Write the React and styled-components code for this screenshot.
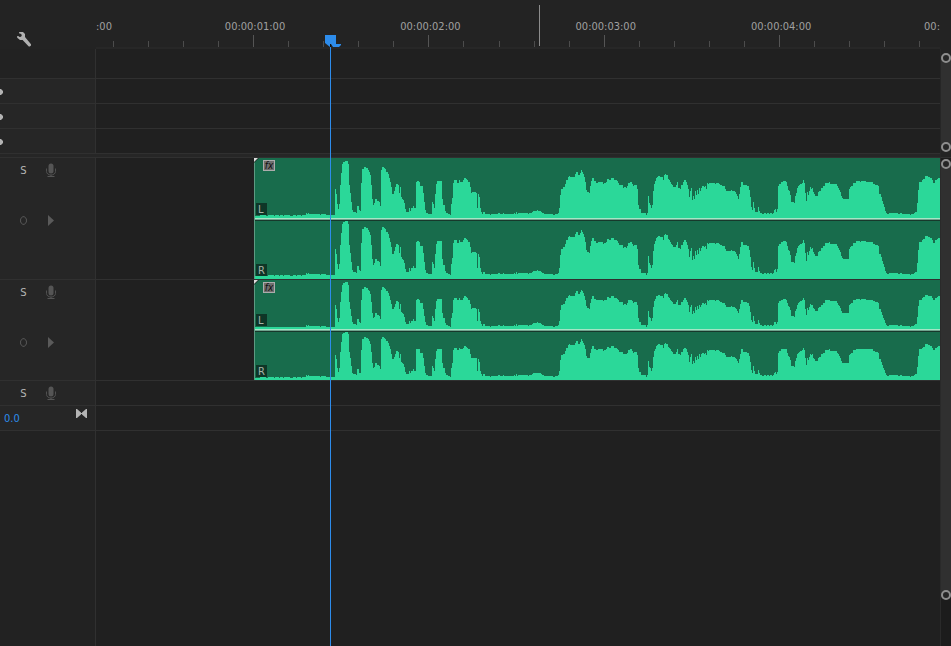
import React from 'react'
import styled, { createGlobalStyle } from 'styled-components'

// [first column, peak height] pairs, each level holds until the next pair
const PEAKS = [
  [0, 2], [6, 3], [12, 2], [14, 3], [20, 2], [21, 3], [25, 2], [26, 3], [29, 2], [30, 3], [36, 2], [39, 3], [42, 2], [43, 3],
  [47, 2], [48, 3], [52, 5], [53, 4], [54, 5], [55, 4], [66, 3], [67, 4], [72, 3],
  [81, 29], [82, 24], [83, 14], [84, 9], [85, 14], [86, 33], [87, 45], [88, 54], [89, 56], [91, 57], [94, 54], [95, 33],
  [96, 25], [97, 16], [98, 8], [99, 6], [102, 5], [103, 12], [105, 8], [106, 7], [107, 35], [108, 49], [110, 51], [112, 50],
  [114, 48], [115, 46], [116, 43], [117, 33], [118, 19], [119, 13], [120, 15], [121, 19], [123, 17], [125, 16], [126, 12],
  [127, 48], [128, 51], [130, 50], [131, 49], [132, 46], [134, 44], [135, 40], [136, 36], [137, 31], [138, 24], [140, 27],
  [141, 31], [142, 34], [144, 33], [145, 25], [146, 31], [147, 21], [148, 19], [149, 18], [150, 15], [151, 9], [152, 6],
  [155, 10], [156, 7], [157, 10], [159, 12], [160, 10], [162, 36], [163, 37], [165, 36], [166, 32], [169, 25], [170, 16],
  [171, 8], [172, 5], [174, 4], [178, 16], [179, 14], [180, 10], [181, 24], [182, 34], [183, 37], [188, 19], [189, 13],
  [191, 7], [192, 5], [194, 4], [196, 3], [197, 14], [198, 20], [199, 35], [200, 38], [203, 35], [205, 38], [206, 36],
  [209, 38], [210, 40], [212, 39], [213, 38], [214, 36], [216, 31], [217, 25], [218, 26], [222, 25], [223, 10], [224, 24],
  [225, 21], [226, 10], [227, 6], [228, 4], [229, 6], [231, 4], [236, 3], [237, 4], [244, 5], [246, 4], [249, 5], [250, 4],
  [260, 5], [261, 4], [262, 6], [263, 4], [264, 5], [274, 4], [275, 5], [278, 6], [279, 7], [283, 8], [284, 7], [287, 6],
  [288, 5], [290, 4], [299, 3], [301, 4], [304, 5], [305, 10], [306, 23], [307, 29], [309, 31], [311, 34], [312, 38],
  [314, 41], [315, 42], [316, 41], [321, 44], [322, 46], [324, 43], [326, 45], [327, 48], [328, 46], [329, 44], [330, 41],
  [331, 36], [332, 28], [333, 26], [335, 25], [336, 32], [337, 37], [338, 40], [340, 37], [342, 35], [344, 36],
  [349, 34], [350, 35], [352, 36], [353, 39], [355, 38], [357, 40], [360, 38], [363, 37], [364, 35], [365, 33], [369, 30],
  [370, 31], [372, 30], [373, 32], [374, 35], [376, 36], [378, 34], [379, 32], [380, 33], [383, 29], [384, 13], [385, 9],
  [387, 5], [392, 3], [393, 5], [394, 22], [395, 15], [396, 13], [397, 10], [398, 13], [399, 27], [400, 34], [401, 37],
  [402, 40], [403, 41], [404, 42], [406, 41], [409, 38], [410, 43], [411, 44], [412, 43], [414, 39], [415, 38], [416, 36],
  [417, 34], [418, 33], [419, 31], [422, 33], [423, 36], [424, 30], [426, 29], [427, 33], [429, 36], [430, 38], [432, 36],
  [433, 33], [434, 29], [435, 21], [436, 27], [437, 30], [438, 18], [439, 22], [440, 19], [441, 27], [442, 23], [443, 28],
  [444, 24], [445, 30], [446, 27], [447, 30], [448, 32], [450, 31], [451, 32], [452, 29], [453, 35], [454, 34], [455, 35],
  [461, 34], [462, 35], [465, 34], [466, 33], [468, 32], [471, 29], [472, 27], [477, 28], [478, 27], [481, 26], [482, 24],
  [483, 22], [484, 19], [485, 24], [486, 31], [487, 36], [489, 33], [493, 32], [495, 28], [496, 21], [497, 11], [498, 8],
  [499, 16], [500, 10], [501, 6], [504, 11], [505, 7], [506, 5], [508, 4], [510, 5], [512, 4], [513, 5], [515, 4], [516, 5],
  [518, 4], [519, 5], [520, 8], [521, 9], [522, 6], [523, 9], [524, 32], [525, 34], [527, 36], [529, 37], [532, 36],
  [533, 32], [534, 28], [535, 27], [536, 23], [537, 16], [540, 15], [541, 22], [542, 25], [543, 30], [544, 32], [545, 33],
  [546, 34], [548, 35], [549, 38], [550, 35], [551, 25], [552, 17], [553, 26], [554, 23], [555, 27], [556, 31], [557, 29],
  [558, 30], [559, 26], [560, 24], [561, 22], [564, 26], [565, 27], [567, 30], [569, 32], [571, 35], [575, 36], [576, 34],
  [583, 32], [584, 30], [585, 28], [586, 26], [587, 22], [588, 20], [589, 19], [595, 29], [596, 31], [597, 32], [599, 35],
  [602, 37], [606, 36], [607, 37], [612, 36], [619, 34], [621, 33], [624, 32], [625, 24], [627, 21], [628, 17], [629, 14],
  [630, 11], [631, 7], [632, 5], [633, 4], [635, 5], [644, 4], [646, 5], [648, 4], [656, 3], [657, 4], [660, 5], [661, 6],
  [663, 15], [664, 28], [665, 36], [668, 38], [669, 39], [671, 42], [674, 41], [676, 40], [678, 38], [679, 35], [681, 38],
  [683, 39], [684, 40],
]
const CLIP_UNITS = 686

// the first and the last second stand outside the view, the edge labels name them
const SECONDS = ['', '00:00:01:00', '00:00:02:00', '00:00:03:00', '00:00:04:00', '']

function wavePath(base, lift) {
  const steps = PEAKS.map(([x, h]) => `H${x}V${base - h - lift}`).join('')
  return `M0 ${base}${steps}H${CLIP_UNITS}V${base}Z`
}

function MicIcon() {
  return (
    <svg width="10" height="15" viewBox="0 0 10 15" fill="none" aria-hidden="true">
      <rect x="2.5" y="0.5" width="5" height="10" rx="2.5" fill="#555" />
      <path d="M0.5 5.500V8.500C0.500 10.500 2.500 12 5 12S9.500 10.500 9.500 8.500V5.500" stroke="#505050" />
      <path d="M5 12V13.500M1.500 13.500H8.500" stroke="#555" />
    </svg>
  )
}

function WrenchIcon() {
  return (
    <svg width="15" height="15" viewBox="0 0 15 15" aria-hidden="true">
      <path
        fill="#b0b0b0"
        d="M2 0.200L3 0H6L8 2V5L14 12.200V13.400L12.800 14.600H11.800L5.600 8H3L0.200 5.800V4H1.200L2.600 5.100L4 4.800L4.800 3.400L4.200 2L2 1.200Z"
      />
    </svg>
  )
}

function TrackControls({ name, keyframes }) {
  return (
    <Controls>
      <ControlLine>
        <IconButton aria-label={`Solo ${name}`}>S</IconButton>
        <IconButton aria-label={`Record ${name}`}><MicIcon /></IconButton>
      </ControlLine>
      {keyframes && (
        <ControlLine>
          <IconButton aria-label={`Add keyframe ${name}`}>
            <svg width="7" height="9" viewBox="0 0 7 9" fill="none" aria-hidden="true">
              <path d="M2.500 0.700H4.500L6.400 3V6L4.500 8.300H2.500L0.600 6V3Z" stroke="#585858" />
            </svg>
          </IconButton>
          <IconButton aria-label={`Next keyframe ${name}`}>
            <svg width="6" height="11" viewBox="0 0 6 11" aria-hidden="true">
              <path d="M0 0L6 5.500L0 11Z" fill="#5a5a5a" />
            </svg>
          </IconButton>
        </ControlLine>
      )}
    </Controls>
  )
}

function Lane({ label, height, units, lift }) {
  return (
    <LaneBox $height={height}>
      <Wave viewBox={`0 0 ${CLIP_UNITS} ${units}`} preserveAspectRatio="none" aria-hidden="true">
        <path d={wavePath(units, lift)} fill="#2bd899" shapeRendering="crispEdges" />
      </Wave>
      <ChannelBadge>{label}</ChannelBadge>
    </LaneBox>
  )
}

function AudioClip({ left, right }) {
  return (
    <Clip>
      <Lane label="L" height={left} units={60} lift={0} />
      <VolumeLine />
      <Lane label="R" height={right} units={58} lift={1} />
      <Corner width="5" height="5" viewBox="0 0 5 5" aria-hidden="true">
        <path d="M0 0H5L0 5Z" fill="#1c2a24" />
        <path d="M0 0H4L0 4Z" fill="#dcdcdc" />
      </Corner>
      <FxButton aria-label="Clip effects">fx</FxButton>
    </Clip>
  )
}

function App() {
  return (
    <>
      <GlobalStyle />
      <Timeline>
        <Main>
          <Top>
            <Tools>
              <WrenchButton aria-label="Timeline display settings"><WrenchIcon /></WrenchButton>
            </Tools>
            <Ruler>
              <Scale>
                {SECONDS.map((time, i) => (
                  <Second key={i}>
                    <TimeLabel>{time}</TimeLabel>
                    <Ticks>
                      <Tick />
                      <Tick />
                      <Tick $major />
                      <Tick />
                      <Tick />
                    </Ticks>
                  </Second>
                ))}
              </Scale>
              <EdgeLabels>
                <span>:00</span>
                <span>00:</span>
              </EdgeLabels>
              <EndMark />
            </Ruler>
          </Top>

          <Row $height={30}>
            <Head $plain />
            <Track />
          </Row>
          {['V3', 'V2', 'V1'].map((name) => (
            <Row key={name} $height={25}>
              <Head>
                <KeyButton aria-label={`Next keyframe ${name}`}>
                  <svg width="3" height="6" viewBox="0 0 3 6" aria-hidden="true">
                    <path d="M0 0H1L3 2V4L1 6H0Z" fill="#b4b4b4" />
                  </svg>
                </KeyButton>
              </Head>
              <Track />
            </Row>
          ))}
          <Splitter />
          <Row $height={122}>
            <Head><TrackControls name="A1" keyframes /></Head>
            <Track><AudioClip left={60} right={58} /></Track>
          </Row>
          <Row $height={101}>
            <Head><TrackControls name="A2" keyframes /></Head>
            <Track><AudioClip left={49} right={48} /></Track>
          </Row>
          <Row $height={25}>
            <Head><TrackControls name="A3" /></Head>
            <Track />
          </Row>
          <Row $height={25}>
            <Head $spread>
              <VolumeInput aria-label="Master volume" defaultValue="0.0" />
              <FitButton aria-label="Fit track">
                <svg width="11" height="9" viewBox="0 0 11 9" aria-hidden="true">
                  <path d="M0 0H1L5 3.500V5.500L1 9H0Z" fill="#b4b4b4" />
                  <path d="M11 0H10L6 3.500V5.500L10 9H11Z" fill="#b4b4b4" />
                  <path d="M5 4H6V5H5Z" fill="#b4b4b4" />
                </svg>
              </FitButton>
            </Head>
            <Track />
          </Row>
          <Rest>
            <Head $plain />
            <Track />
          </Rest>

          <Overlay>
            <Playhead>
              <PlayheadGrip width="17" height="12" viewBox="0 0 17 12" aria-hidden="true">
                <path d="M0 0H11V9H16V10L14 12H8L6 9L5 9V12L0 8Z" fill="#2d8ceb" />
                <path d="M5 9H6V12H5Z" fill="#101010" />
              </PlayheadGrip>
            </Playhead>
          </Overlay>
        </Main>

        <Scrollbars>
          <VideoScroll>
            <Thumb>
              <Handle aria-label="Video zoom top" />
              <Handle aria-label="Video zoom bottom" />
            </Thumb>
          </VideoScroll>
          <AudioScroll>
            <Thumb>
              <Handle aria-label="Audio zoom top" />
              <Handle aria-label="Audio zoom bottom" />
            </Thumb>
          </AudioScroll>
        </Scrollbars>
      </Timeline>
    </>
  )
}
export default App;

const GlobalStyle = createGlobalStyle`
    *{
        box-sizing: border-box;
    }
    body{
        margin: 0;
        background: #212121;
        color: #a0a0a0;
        font: 11px "DejaVu Sans Condensed", "DejaVu Sans", sans-serif;
    }
    button, input{
        margin: 0;
        padding: 0;
        border: none;
        background: none;
        color: inherit;
        font: inherit;
    }
    svg{
        display: block;
    }
`;

//Page frame
const Timeline = styled.div`
    display: flex;
    min-height: 100vh;
`;

const Main = styled.main`
    position: relative;
    flex: 1;
    min-width: 0;
    display: flex;
    flex-direction: column;
`;

//Ruler
const Top = styled.header`
    display: flex;
    height: 49px;
    background: #232323;
`;

const Tools = styled.div`
    width: 96px;
    padding: 32px 0 0 17px;
`;

const WrenchButton = styled.button`
    display: block;
`;

const Ruler = styled.div`
    position: relative;
    flex: 1;
    min-width: 0;
    overflow: hidden;
    border-bottom: 2px solid #272727;
`;

const Scale = styled.div`
    display: flex;
    margin-left: -12.5%;
    width: 112.5%;
    height: 100%;
`;

const Second = styled.div`
    flex: none;
    width: 18.47%;
    padding-top: 20px;
    display: flex;
    flex-direction: column;
    justify-content: space-between;
`;

const TimeLabel = styled.span`
    height: 14px;
    padding-left: 3px;
    line-height: 14px;
    text-align: center;
    white-space: nowrap;
`;

const EdgeLabels = styled.div`
    position: absolute;
    left: 0;
    right: 0;
    top: 20px;
    display: flex;
    justify-content: space-between;
    line-height: 14px;
`;

const Ticks = styled.div`
    display: grid;
    grid-template-columns: repeat(5, 1fr);
    align-items: end;
    justify-items: center;
`;

const Tick = styled.i`
    width: 1px;
    height: ${(props) => (props.$major ? 12 : 6)}px;
    background: ${(props) => (props.$major ? '#555' : '#4c4c4c')};
`;

const EndMark = styled.i`
    position: absolute;
    left: 52.5%;
    top: 5px;
    width: 1px;
    height: 41px;
    background: #8c8c8c;
`;

//Track rows
const Row = styled.section`
    display: flex;
    height: ${(props) => props.$height}px;
    border-bottom: 1px solid #303030;
`;

const Rest = styled.section`
    flex: 1;
    display: flex;
`;

const Head = styled.div`
    display: flex;
    justify-content: ${(props) => (props.$spread ? 'space-between' : 'flex-start')};
    width: 96px;
    padding-right: ${(props) => (props.$spread ? 8 : 0)}px;
    border-right: 1px solid #303030;
    background: ${(props) => (props.$plain ? '#222' : '#262626')};
`;

const Track = styled.div`
    flex: 1;
    min-width: 0;
    background: #202020;
`;

const Splitter = styled.div`
    height: 4px;
    border-bottom: 1px solid #303030;
    background: #262626;
`;

const Controls = styled.div`
    display: flex;
    flex-direction: column;
    gap: 25px;
    padding-left: 10px;
`;

const ControlLine = styled.div`
    display: flex;
    height: 25px;
`;

const IconButton = styled.button`
    display: flex;
    align-items: center;
    justify-content: center;
    width: 27px;
    color: #b4b4b4;
    font: 10px "DejaVu Sans", sans-serif;
`;

const KeyButton = styled.button`
    display: flex;
    align-items: center;
    padding-top: 2px;
`;

const VolumeInput = styled.input`
    width: 40px;
    padding-left: 4px;
    color: #2d8ceb;
`;

const FitButton = styled.button`
    display: flex;
    padding-top: 3px;
`;

//Clips
const Clip = styled.div`
    position: relative;
    margin-left: 18.72%;
    background: #186c4c;
    &:before{
        content: '';
        position: absolute;
        z-index: 1;
        left: 0;
        top: 0;
        bottom: 0;
        width: 1px;
        background: #5d9a82;
    }
`;

const LaneBox = styled.div`
    position: relative;
    height: ${(props) => props.$height}px;
`;

const Wave = styled.svg`
    width: 100%;
    height: 100%;
`;

const ChannelBadge = styled.span`
    position: absolute;
    left: 2px;
    bottom: 3px;
    width: 11px;
    height: 12px;
    padding-left: 2px;
    background: #0e3627;
    color: #a8b4a8;
    font-size: 11px;
    line-height: 13px;
`;

const VolumeLine = styled.div`
    height: 3px;
    border-top: 1px solid #a4e6c6;
    border-bottom: 1px solid #17382b;
    background: #6fa38d;
`;

const Corner = styled.svg`
    position: absolute;
    z-index: 2;
    left: 0;
    top: 0;
`;

const FxButton = styled.button`
    position: absolute;
    left: 9px;
    top: 2px;
    width: 12px;
    height: 11px;
    border: 1px solid #acacac;
    background: #6e6e6e;
    color: #111;
    font: italic 10px "DejaVu Sans Condensed", sans-serif;
    line-height: 8px;
`;

//Playhead
const Overlay = styled.div`
    position: absolute;
    left: 96px;
    right: 0;
    top: 35px;
    bottom: 0;
    pointer-events: none;
`;

const Playhead = styled.div`
    position: absolute;
    left: 27.73%;
    top: 12px;
    bottom: 0;
    width: 1px;
    background: #2d8ceb;
`;

const PlayheadGrip = styled.svg`
    position: absolute;
    left: -5px;
    top: -12px;
`;

//Scrollbars
const Scrollbars = styled.aside`
    display: flex;
    flex-direction: column;
    width: 11px;
    padding-top: 49px;
    background: #232323;
`;

const VideoScroll = styled.div`
    display: flex;
    height: 109px;
    padding: 4px 0 5px;
    border-left: 1px solid #262626;
    border-bottom: 1px solid #303030;
`;

const AudioScroll = styled.div`
    flex: 1;
    padding: 1px 0 46px;
    display: flex;
    border-left: 1px solid #2a2a2a;
    background: #1c1c1c;
`;

const Thumb = styled.div`
    flex: 1;
    display: flex;
    flex-direction: column;
    justify-content: space-between;
    border-radius: 5px;
    background: #303030;
`;

const Handle = styled.button`
    width: 10px;
    height: 10px;
    border: 2px solid #8e8e8e;
    border-radius: 50%;
    background: #262626;
`;
